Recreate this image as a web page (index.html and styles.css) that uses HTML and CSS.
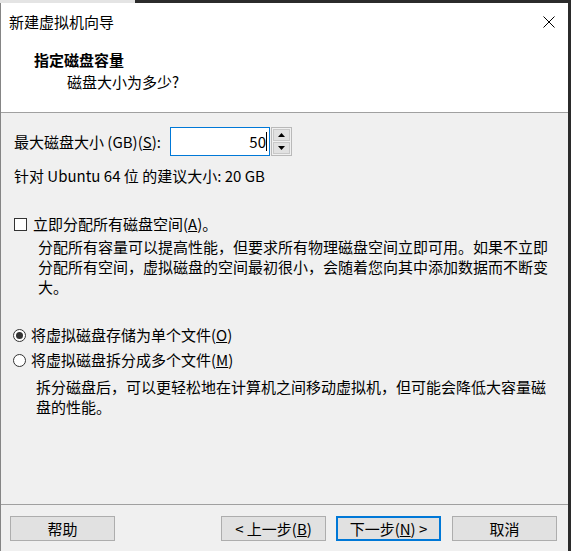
FILE: index.html
```html
<!DOCTYPE html>
<html lang="zh-CN">
<head>
<meta charset="utf-8">
<title>新建虚拟机向导</title>
<link rel="stylesheet" href="styles.css">
</head>
<body>
<div class="topstrip"></div>
<div class="frame">
  <div class="window">
    <div class="titlebar">
      <span class="title">新建虚拟机向导</span>
      <svg class="close" width="12" height="12" viewBox="0 0 12 12" aria-hidden="true">
        <path d="M0.5 0.5 L11.5 11.5 M11.5 0.5 L0.5 11.5" stroke="#000" stroke-width="1" fill="none"/>
      </svg>
    </div>
    <div class="header">
      <div class="h-title">指定磁盘容量</div>
      <div class="h-sub">磁盘大小为多少?</div>
    </div>
    <div class="content">
      <div class="size-row">
        <label class="size-label">最大磁盘大小 (GB)(<u>S</u>):</label>
        <div class="spin-input">50<span class="caret"></span></div>
        <div class="spin-btns">
          <div class="spin-btn">
            <svg width="7" height="4" viewBox="0 0 7 4"><path d="M3.5 0 L7 4 L0 4 Z" fill="#000"/></svg>
          </div>
          <div class="spin-btn">
            <svg width="7" height="4" viewBox="0 0 7 4"><path d="M0 0 L7 0 L3.5 4 Z" fill="#000"/></svg>
          </div>
        </div>
      </div>
      <div class="hint">针对 Ubuntu 64 位 的建议大小: 20 GB</div>

      <div class="check-row">
        <span class="checkbox"></span>
        <span>立即分配所有磁盘空间(<u>A</u>)。</span>
      </div>
      <p class="desc desc-check">分配所有容量可以提高性能，但要求所有物理磁盘空间立即可用。如果不立即分配所有空间，虚拟磁盘的空间最初很小，会随着您向其中添加数据而不断变大。</p>

      <div class="radio-row radio-first">
        <span class="radio checked"></span>
        <span>将虚拟磁盘存储为单个文件(<u>O</u>)</span>
      </div>
      <div class="radio-row radio-second">
        <span class="radio"></span>
        <span>将虚拟磁盘拆分成多个文件(<u>M</u>)</span>
      </div>
      <p class="desc desc-radio">拆分磁盘后，可以更轻松地在计算机之间移动虚拟机，但可能会降低大容量磁盘的性能。</p>
    </div>
    <div class="footer">
      <button class="btn btn-help">帮助</button>
      <button class="btn btn-back">&lt; 上一步(<u>B</u>)</button>
      <button class="btn btn-next">下一步(<u>N</u>) &gt;</button>
      <button class="btn btn-cancel">取消</button>
    </div>
  </div>
</div>
</body>
</html>
```

FILE: styles.css
```css
* {
  box-sizing: border-box;
}

html, body {
  margin: 0;
  padding: 0;
}

body {
  width: 571px;
  height: 551px;
  overflow: hidden;
  background: #2b2b2b;
  font-family: "Noto Sans CJK SC", "Noto Sans", sans-serif;
  font-size: 15px;
  line-height: 20px;
  color: #000;
}

.topstrip {
  height: 3px;
  background: linear-gradient(to right, #e4e4e4 0, #e4e4e4 135px, #2b2b2b 135px);
}

.frame {
  display: flex;
  height: 548px;
}

.window {
  width: 568px;
  height: 548px;
  border-left: 1px solid #858585;
  background: #f0f0f0;
  display: flex;
  flex-direction: column;
}

.titlebar {
  height: 37px;
  background: #fff;
  display: flex;
  align-items: center;
  justify-content: space-between;
  padding: 0 13px 0 8px;
}

.title {
  line-height: 20px;
}

.close {
  display: block;
}

.header {
  background: #fff;
  padding: 10px 0 20px 33px;
  border-bottom: 1px solid #a0a0a0;
}

.h-title {
  font-weight: bold;
  line-height: 20px;
}

.h-sub {
  margin-top: 2px;
  padding-left: 33px;
  line-height: 20px;
}

.content {
  padding-left: 12px;
}

.size-row {
  margin-top: 14px;
  margin-left: 1px;
  height: 29px;
  display: flex;
  align-items: center;
}

.size-label {
  width: 156px;
  flex: none;
}

.spin-input {
  width: 100px;
  height: 29px;
  border: 1px solid #0078d7;
  background: #fff;
  text-align: right;
  padding-right: 2px;
  line-height: 27px;
  display: flex;
  justify-content: flex-end;
  align-items: center;
}

.caret {
  display: inline-block;
  width: 1px;
  height: 19px;
  background: #000;
}

.spin-btns {
  width: 21px;
  height: 29px;
  margin-left: 1px;
  border: 1px solid #b9b9b9;
  background: #f0f0f0;
  display: flex;
  flex-direction: column;
  padding: 1px;
  gap: 1px;
}

.spin-btn {
  flex: 1;
  background: #e1e1e1;
  border: 1px solid #c8c8c8;
  display: flex;
  align-items: center;
  justify-content: center;
}

.spin-btn svg {
  display: block;
}

.hint {
  margin-top: 10px;
  margin-left: 1px;
}

.check-row {
  margin-top: 28px;
  margin-left: 1px;
  height: 20px;
  display: flex;
  align-items: center;
  gap: 6px;
}

.checkbox {
  width: 13px;
  height: 13px;
  border: 1px solid #333;
  background: #fff;
  flex: none;
}

.desc {
  margin: 0;
  line-height: 20px;
}

.desc-check {
  margin-top: 3px;
  margin-left: 25px;
  width: 517px;
}

.radio-row {
  height: 20px;
  display: flex;
  align-items: center;
  gap: 5px;
}

.radio-first {
  margin-top: 28px;
}

.radio-second {
  margin-top: 5px;
}

.radio {
  width: 13px;
  height: 13px;
  border-radius: 50%;
  border: 1px solid #333;
  background: #fff;
  flex: none;
  display: flex;
  align-items: center;
  justify-content: center;
}

.radio.checked::after {
  content: "";
  width: 7px;
  height: 7px;
  border-radius: 50%;
  background: #333;
}

.desc-radio {
  margin-top: 7px;
  margin-left: 23px;
  width: 517px;
}

.footer {
  margin-top: auto;
  border-top: 1px solid #a0a0a0;
  padding: 11px 11px 10px 9px;
  display: flex;
}

.btn {
  width: 105px;
  height: 25px;
  padding: 0;
  background: #e1e1e1;
  border: 1px solid #adadad;
  font: inherit;
  line-height: 20px;
  color: #000;
}

.btn-help {
  margin-right: auto;
}

.btn-next {
  margin-left: 10px;
  border: 2px solid #0078d7;
}

.btn-cancel {
  margin-left: 11px;
}
```
